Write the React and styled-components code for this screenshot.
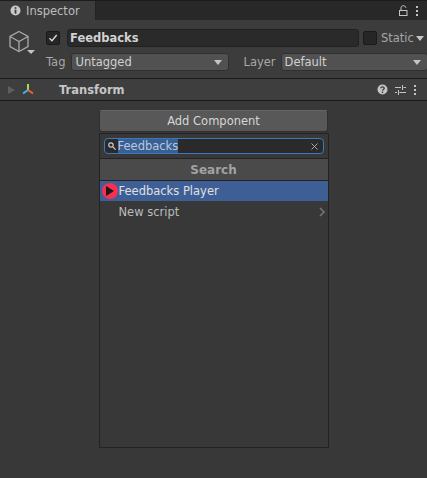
import React from "react";
import styled, { createGlobalStyle } from "styled-components";

const Global = createGlobalStyle`
  html, body { margin: 0; padding: 0; background: #383838; }
  * { box-sizing: border-box; }
`;
const Page = styled.div`
  width: 427px; height: 478px; background: #383838; overflow: hidden;
  font-family: "DejaVu Sans", sans-serif; font-size: 11.5px; color: #c4c4c4;
  display: flex; flex-direction: column;
`;
const TabStrip = styled.div`
  height: 20px; background: #282828; border-top: 1px solid #1c1c1c;
  display: flex; align-items: stretch; justify-content: space-between; flex: none;
`;
const Tab = styled.div`
  width: 96px; background: #3c3c3c; border-right: 1px solid #232323;
  display: flex; align-items: center; gap: 5px; padding-left: 10px; color: #bdbdbd;
`;
const TabTools = styled.div`
  display: flex; align-items: center; gap: 7px; padding-right: 8px;
`;
const Header = styled.div`
  height: 59px; background: #3c3c3c; border-bottom: 1px solid #1a1a1a; flex: none;
  display: flex; position: relative;
`;
const CubeColumn = styled.div`
  width: 46px; flex: none; padding: 10px 0 0 8px; position: relative;
`;
const CubeArrow = styled.div`
  position: absolute; left: 27px; top: 30px; width: 0; height: 0;
  border-left: 4px solid transparent; border-right: 4px solid transparent; border-top: 4px solid #c4c4c4;
`;
const HeaderRows = styled.div`
  flex: 1; display: flex; flex-direction: column; gap: 6px; padding: 9px 3px 0 0;
`;
const Row = styled.div`
  display: flex; align-items: center; height: 18px;
`;
const CheckBox = styled.div`
  width: 14px; height: 14px; background: #262626; border: 1px solid #1a1a1a; border-radius: 2px; flex: none;
  display: flex; align-items: center; justify-content: center;
`;
const NameField = styled.div`
  margin-left: 7px; width: 292px; height: 18px; background: #2a2a2a; border: 1px solid #212121; border-radius: 3px;
  color: #d2d2d2; font-weight: bold; display: flex; align-items: center; padding-left: 2px; flex: none;
`;
const StaticLabel = styled.div`
  margin-left: 4px; color: #a6a6a6; display: flex; align-items: center; gap: 2px;
`;
const Caret = styled.span`
  width: 0; height: 0; display: block; flex: none;
  border-left: 4px solid transparent; border-right: 4px solid transparent; border-top: 5px solid ${p => p.$c || "#c4c4c4"};
`;
const FieldLabel = styled.span`
  color: #a8a8a8; flex: none;
`;
const Select = styled.div`
  height: 18px; width: ${p => p.$w}px; background: #515151; border: 1px solid #303030; border-radius: 3px; flex: none;
  margin-left: ${p => p.$ml}px; display: flex; align-items: center; justify-content: space-between; padding: 0 6px 0 3px; color: #d0d0d0;
`;
const CompHeader = styled.div`
  height: 22px; background: #3e3e3e; border-bottom: 1px solid #1a1a1a; flex: none;
  display: flex; align-items: center; padding-left: 8px;
`;
const Triangle = styled.span`
  width: 0; height: 0; display: block; flex: none;
  border-top: 4.5px solid transparent; border-bottom: 4.5px solid transparent; border-left: 7px solid #5e5e5e;
`;
const CompTitle = styled.span`
  margin-left: 24px; font-weight: bold; color: #c6c6c6; flex: 1;
`;
const CompTools = styled.div`
  display: flex; align-items: center; gap: 7px; padding-right: 10px;
`;
const Body = styled.div`
  flex: 1; display: flex; flex-direction: column; align-items: center; padding: 9px 0 0 0; margin-left: 0;
`;
const AddButton = styled.div`
  width: 229px; height: 22px; background: #585858; border: 1px solid #303030; border-top-color: #646464; border-radius: 3px;
  margin-bottom: 1px; display: flex; align-items: center; justify-content: center; color: #d6d6d6;
`;
const Popup = styled.div`
  width: 230px; height: 315px; background: #383838; border: 1px solid #232323; flex: none;
  display: flex; flex-direction: column;
`;
const SearchBar = styled.div`
  height: 25px; padding: 4px 4px 0 4px; border-bottom: 1px solid #232323; flex: none;
`;
const SearchField = styled.div`
  height: 16px; background: #2a2a2a; border: 1px solid #3a79bb; border-radius: 4px;
  display: flex; align-items: center; padding: 0 5px 0 3px; color: #c8c8c8;
`;
const Selection = styled.span`
  background: #3a5f95; color: #b9c8dc; margin-left: 2px; line-height: 14px; flex: none;
`;
const Spacer = styled.span`flex: 1;`;
const SearchTitle = styled.div`
  height: 22px; background: #4a4a4a; border-bottom: 1px solid #232323; flex: none;
  display: flex; align-items: center; justify-content: center; font-weight: bold; color: #a3a3a3; font-size: 12px;
`;
const Item = styled.div`
  height: ${p => p.$h}px; flex: none; display: flex; align-items: center; position: relative; padding-left: 19px;
  background: ${p => (p.$selected ? "#3e5f96" : "transparent")};
  color: ${p => (p.$selected ? "#e0e0e0" : "#bcbcbc")};
`;
const PlayBadge = styled.span`
  position: absolute; left: 2px; top: 2px; width: 16px; height: 16px; border-radius: 50%;
  background: #f7304f; display: flex; align-items: center; justify-content: center;
`;
const Chevron = styled.svg`
  position: absolute; right: 3px; top: 6px;
`;

const Dots = ({ c = "#c4c4c4" }) => (
  <svg width="4" height="12" viewBox="0 0 4 12"><g fill={c}><rect x="1" y="1" width="2" height="2" /><rect x="1" y="5" width="2" height="2" /><rect x="1" y="9" width="2" height="2" /></g></svg>
);

export default function App() {
  return (
    <Page>
      <Global />
      <TabStrip>
        <Tab>
          <svg width="11" height="11" viewBox="0 0 11 11"><circle cx="5.5" cy="5.5" r="5" fill="#c8c8c8" /><rect x="4.6" y="4.6" width="1.8" height="4" fill="#3c3c3c" /><rect x="4.6" y="2.2" width="1.8" height="1.6" fill="#3c3c3c" /></svg>
          Inspector
        </Tab>
        <TabTools>
          <svg width="9" height="11" viewBox="0 0 9 11" fill="none" stroke="#c4c4c4"><rect x="0.5" y="5.5" width="7.5" height="5" /><path d="M2 5V2.8C2 0 6.8 0 6.8 2.8" /></svg>
          <Dots />
        </TabTools>
      </TabStrip>
      <Header>
        <CubeColumn>
          <svg width="22" height="23" viewBox="0 0 22 23" fill="none" stroke="#a9a9a9" strokeWidth="1.3"><path d="M11 1.5L20 6.5V16.5L11 21.5L2 16.5V6.5Z" /><path d="M2 6.5L11 11.5L20 6.5M11 11.5V21.5" /></svg>
          <CubeArrow />
        </CubeColumn>
        <HeaderRows>
          <Row>
            <CheckBox>
              <svg width="10" height="10" viewBox="0 0 10 10" fill="none" stroke="#dcdcdc" strokeWidth="1.4"><path d="M1.5 5.2L4 7.7L8.7 2" /></svg>
            </CheckBox>
            <NameField>Feedbacks</NameField>
            <CheckBox style={{ marginLeft: 4 }} />
            <StaticLabel>Static<Caret /></StaticLabel>
          </Row>
          <Row>
            <FieldLabel>Tag</FieldLabel>
            <Select $w={158} $ml={6}>Untagged<Caret /></Select>
            <FieldLabel style={{ marginLeft: 14 }}>Layer</FieldLabel>
            <Select $w={147} $ml={5}>Default<Caret /></Select>
          </Row>
        </HeaderRows>
      </Header>
      <CompHeader>
        <Triangle />
        <svg width="14" height="13" viewBox="0 0 14 13" style={{ marginLeft: 6 }} strokeWidth="2" fill="none"><path d="M7 1V7" stroke="#9fe04a" /><path d="M7 7L2 10.5" stroke="#49b4ee" /><path d="M7 7L12 10.5" stroke="#ee6433" /></svg>
        <CompTitle>Transform</CompTitle>
        <CompTools>
          <svg width="11" height="11" viewBox="0 0 11 11"><circle cx="5.5" cy="5.5" r="5" fill="#c4c4c4" /><path d="M3.8 4.3C3.8 2.4 7.2 2.4 7.2 4.3C7.2 5.5 5.5 5.4 5.5 6.8" fill="none" stroke="#3e3e3e" strokeWidth="1.3" /><rect x="4.8" y="7.6" width="1.4" height="1.4" fill="#3e3e3e" /></svg>
          <svg width="11" height="10" viewBox="0 0 11 10" fill="none" stroke="#c4c4c4"><path d="M0 2.5H6M8.5 2.5H11M7.5 0V5M0 7.5H2M4.5 7.5H11M3.5 5V10" /></svg>
          <Dots />
        </CompTools>
      </CompHeader>
      <Body>
        <AddButton>Add Component</AddButton>
        <Popup>
          <SearchBar>
            <SearchField>
              <svg width="8" height="8" viewBox="0 0 8 8" fill="none" stroke="#d0d0d0" strokeWidth="1.2"><circle cx="3" cy="3" r="2.2" /><path d="M4.8 4.8L7.6 7.6" /></svg>
              <Selection>Feedbacks</Selection>
              <Spacer />
              <svg width="7" height="7" viewBox="0 0 7 7" stroke="#a8a8a8"><path d="M0.5 0.5L6.5 6.5M6.5 0.5L0.5 6.5" /></svg>
            </SearchField>
          </SearchBar>
          <SearchTitle>Search</SearchTitle>
          <Item $selected $h={20}>
            <PlayBadge>
              <svg width="8" height="10" viewBox="0 0 8 10"><path d="M0 0L8 5L0 10Z" fill="#1a1a1a" /></svg>
            </PlayBadge>
            Feedbacks Player
          </Item>
          <Item $h={21}>
            New script
            <Chevron width="6" height="10" viewBox="0 0 6 10" fill="none" stroke="#787878" strokeWidth="1.5"><path d="M1 1L5 5L1 9" /></Chevron>
          </Item>
        </Popup>
      </Body>
    </Page>
  );
}
